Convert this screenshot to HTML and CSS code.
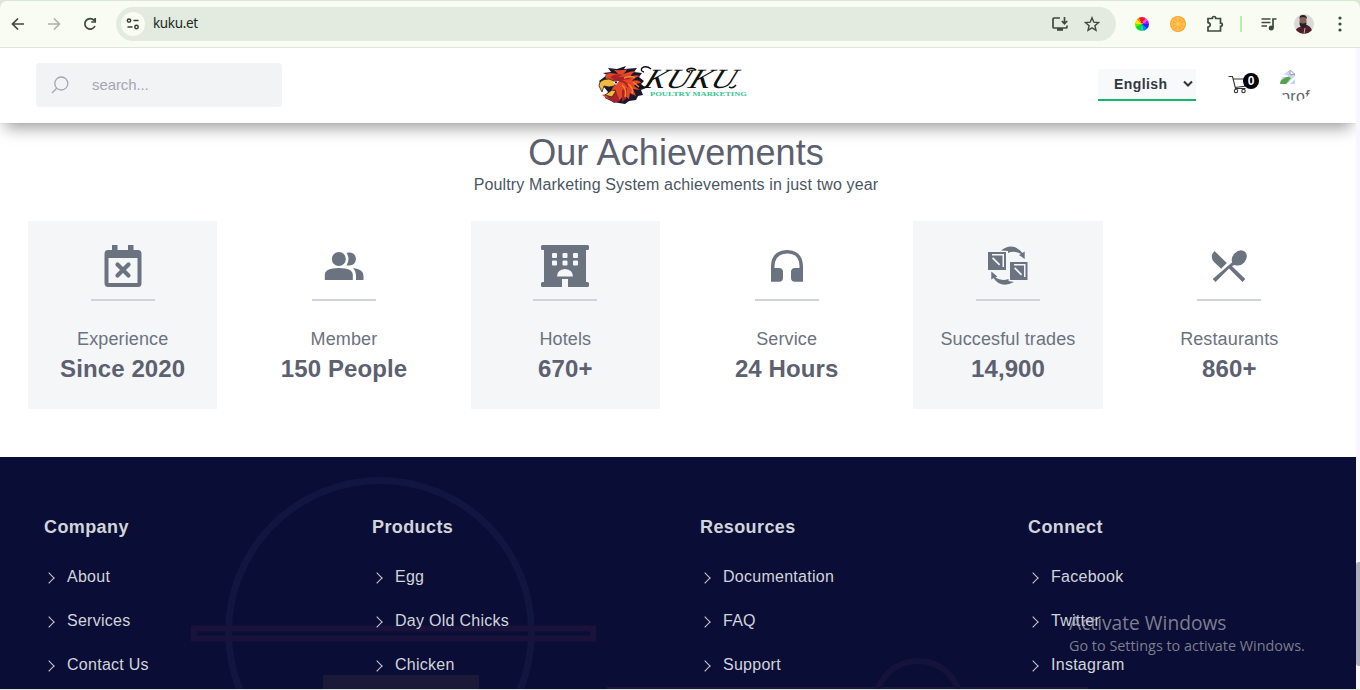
FILE: index.html
```html
<!DOCTYPE html>
<html lang="en">
<head>
<meta charset="utf-8">
<title>Kuku Poultry Marketing</title>
<link rel="stylesheet" href="styles.css">
</head>
<body>
<div class="window">
  <header class="browser">
    <svg class="bi back" width="16" height="16" viewBox="0 0 16 16"><path d="M14 8H3M8 2.500L2.500 8L8 13.500"/></svg>
    <svg class="bi forward" width="16" height="16" viewBox="0 0 16 16"><path d="M2 8h11M8 2.500L13.500 8L8 13.500"/></svg>
    <svg class="bi reload" width="16" height="16" viewBox="0 0 16 16"><path d="M13 10a5.300 5.300 0 1 1-.8-5.600M13.200 2v4H9.200"/></svg>
    <div class="omnibox">
      <span class="tune"><svg width="14" height="12" viewBox="0 0 14 12"><circle cx="3" cy="2.600" r="1.700"/><path d="M7.500 2.600H12.500M1.500 9H6.500"/><circle cx="10.500" cy="9" r="1.700"/></svg></span>
      <span class="url">kuku.et</span>
      <svg class="bi install" width="18" height="16" viewBox="0 0 18 16"><path d="M9 2H3Q2 2 2 3v8q0 1 1 1h12q1 0 1-1V9.500M13.500 1v6M10.800 5l2.700 2.700L16.200 5"/><path class="solid" d="M6 12h6v2.800H6z"/></svg>
      <svg class="bi star" width="16" height="16" viewBox="0 0 16 16"><path d="M8 1.800l1.800 4.400 4.700.4-3.600 3.100 1.100 4.600L8 11.800l-4 2.500 1.100-4.600-3.600-3.100 4.700-.4z"/></svg>
    </div>
    <span class="wheel"></span>
    <svg class="orange" width="16" height="16" viewBox="0 0 16 16"><circle cx="8" cy="8" r="8" fill="#f9a42c"/><circle cx="8" cy="8" r="6.300" fill="#ffad2b" stroke="#ffd58b" stroke-width=".7"/><path d="M8 2v12M2 8h12M3.800 3.800l8.400 8.400M12.200 3.800l-8.400 8.400" stroke="#ffd27c" stroke-width=".8"/></svg>
    <svg class="bi puzzle" width="18" height="18" viewBox="0 0 18 18"><path d="M2 3.500h4.300Q6.300 1.500 8 1.500t1.700 2H14.500v4.700q1.800 0 1.800 1.600t-1.800 1.600V16H2v-4q2.200-.3 2.200-2.200T2 7.600z"/></svg>
    <span class="divider"></span>
    <svg class="bi media" width="16" height="16" viewBox="0 0 16 16"><path d="M.5 3h9M.5 6.500h9M.5 10H6M12 12V3h3.500"/><circle class="solid" cx="10.200" cy="12" r="2.500"/></svg>
    <svg class="avatar" width="20" height="20" viewBox="0 0 20 20"><defs><clipPath id="face"><circle cx="10" cy="10" r="10"/></clipPath></defs><g clip-path="url(#face)"><path fill="#d9d9db" d="M0 0h20v20H0z"/><path fill="#4b2029" d="M1 20q0-6 5-7l3-2h4q5 2 6 9z"/><ellipse cx="9" cy="7" rx="3.500" ry="5.500" fill="#8a6254"/><path fill="#252126" d="M5.500 5Q5 1 9 1t4 4q-1-2-4-2t-3.500 2M5.500 8.500q3.500 2 7 0 0 5-3.500 5t-3.500-5"/><path stroke="#db9fa7" d="M11 14l-1 6"/></g></svg>
    <svg class="dots" width="4" height="16" viewBox="0 0 4 16"><circle cx="2" cy="2" r="1.600"/><circle cx="2" cy="8" r="1.600"/><circle cx="2" cy="14" r="1.600"/></svg>
  </header>

  <div class="view">
    <div class="page">
      <nav class="nav">
        <label class="search">
          <svg width="18" height="18" viewBox="0 0 18 18"><circle cx="10.300" cy="7.500" r="6.500"/><path d="M5.700 12.200L1 17"/></svg>
          <span>search...</span>
        </label>
        <svg class="logo" width="152" height="42" viewBox="0 0 152 42">
          <path fill="#19172b" d="M2 17L10 11 6 9l8-1-3-4 9 1 9-3-2 3 13-1-3 4 8 1-3 4 5 4-3 3 5 4-5 2 2 5-5 1-2 4-7 1-4 3-12-2-8-4 3-6z"/>
          <path fill="#e34725" d="M10 16Q5 10 13 9l8 1Q17 5 14 5q6 2 11 1 3 0 5-1-1 3-4 5 8-3 13-3-4 2-6 6 5-3 10-1-5 1-8 5 7-2 9 2-5 0-7 3l6 4-7-1 3 7-6-3-1 6-5-4-5 6-11-2-6-4 8-2 4-8z"/>
          <path fill="#a8222c" d="M13 13q6-4 13-2l-6 2q11-1 14 2l-9 1q8 3 6 8l-4-5-10-3zM18 25l5 12-6 2-7-6zM30 24l-1 11-4 3V26z"/>
          <path fill="#f2b83f" stroke="#2b2024" stroke-width=".8" d="M2 22q0-7 10-7l8 3-3 4-5 1-5-1-2 6zM8 31l7-5 4 1-4 6z"/>
          <path fill="#fff" d="M16 18l6-1-3 4z"/><circle cx="19" cy="18.500" r="1"/>
          <path fill="none" stroke="#f78627" stroke-width="1.500" d="M25 21q5 4 3 12M31 20q6 4 4 10M36 18l6 5M27 14q8-3 11 0"/>
          <g transform="translate(9 0) skewX(-22)">
            <text class="brand" x="46" y="24" textLength="90" lengthAdjust="spacingAndGlyphs">KUKU</text>
          </g>
          <path class="flourish" d="M43 22q5 5 12-6M47 8q-4-1-2-4 4-3 9 1M93 8q-5-1-2-3 5-2 8 1M132 23q4 2 7-2"/>
          <text class="tagline" x="53" y="31.500" textLength="97" lengthAdjust="spacingAndGlyphs">POULTRY MARKETING</text>
        </svg>
        <div class="actions">
          <div class="language"><span>English</span><svg width="10" height="8" viewBox="0 0 10 8"><path d="M1 1.500l4 4 4-4"/></svg></div>
          <div class="cart">
            <svg width="20" height="19" viewBox="0 0 20 19"><path d="M.5 1.500h4l3 12h10M5 4h14l-2.500 7.300L7 12.500"/><circle cx="8" cy="16" r="1.700"/><circle cx="15.500" cy="16" r="1.700"/></svg>
            <span class="badge">0</span>
          </div>
          <div class="profile">
            <svg width="16" height="16" viewBox="0 0 16 16"><path fill="#c5d5f6" d="M0 1h10l5 4v10H0z"/><path fill="#fff" d="M2 7q1-3 3-1 3-1 3 2H2z"/><path fill="#52a447" d="M0 15V13q6-7 11-4l-5 6z"/><path fill="#fff" d="M16 6v3l-7 7H6z"/><path fill="#fff" stroke="#9aa0aa" d="M10 .8v4.700h5z"/><path fill="none" stroke="#a2a8b0" d="M0 15V1h4"/></svg>
            <span>profile</span>
          </div>
        </div>
      </nav>

      <main class="achievements">
        <h1>Our Achievements</h1>
        <p class="lead">Poultry Marketing System achievements in just two year</p>
        <div class="stats">
          <article class="stat shaded">
            <svg width="48" height="48" viewBox="0 0 48 48"><path fill-rule="evenodd" d="M13 3h5.500v5h10.500V3h5.500v5H39q3.500 0 3.500 4v29q0 4-3.500 4H9q-3.500 0-3.500-4V12q0-4 3.500-4h4zM9.500 16v25h29V16z"/><path class="cross" d="M18.500 22.500l11 11M29.500 22.500l-11 11"/></svg>
            <h2>Experience</h2><strong>Since 2020</strong>
          </article>
          <article class="stat">
            <svg width="48" height="48" viewBox="0 0 48 48"><circle cx="18.800" cy="17" r="7"/><path d="M4.800 38v-5q0-7 14-7t14 7v5zM26.500 23.200q4-6 0-12.400 8.500-2 9.500 6.200-1 8-9.500 6.200M33 26q10.500 1 10.500 8v4h-7.500v-5q0-4-3-7"/></svg>
            <h2>Member</h2><strong>150 People</strong>
          </article>
          <article class="stat shaded">
            <svg width="48" height="48" viewBox="0 0 48 48"><path fill-rule="evenodd" d="M1.500 3h45q1.500 0 1.500 1.500v2Q48 8 46.500 8H45v32h1.500q1.500 0 1.500 1.500v2q0 1.500-1.500 1.500H27v-8h-6v8H1.500Q0 45 0 43.500v-2Q0 40 1.500 40H3V8H1.500Q0 8 0 6.500v-2Q0 3 1.500 3zM12 11q-1 0-1 1v3q0 1 1 1h3q1 0 1-1v-3q0-1-1-1zm10.500 0q-1 0-1 1v3q0 1 1 1h3q1 0 1-1v-3q0-1-1-1zm10.500 0q-1 0-1 1v3q0 1 1 1h3q1 0 1-1v-3q0-1-1-1zM12 18.500q-1 0-1 1v3q0 1 1 1h3q1 0 1-1v-3q0-1-1-1zm10.500 0q-1 0-1 1v3q0 1 1 1h3q1 0 1-1v-3q0-1-1-1zm10.500 0q-1 0-1 1v3q0 1 1 1h3q1 0 1-1v-3q0-1-1-1zM16 34.500h16q0-7-8-7.500-8 .5-8 7.500z"/></svg>
            <h2>Hotels</h2><strong>670+</strong>
          </article>
          <article class="stat">
            <svg width="48" height="48" viewBox="0 0 48 48"><path d="M24 8Q8.500 8.500 8 24v15.800h8q4 0 4-4V30q0-4-4-4h-4.500v-2q.5-12 12.500-12.500T36.500 24v2H32q-4 0-4 4v5.800q0 4 4 4h8V24Q39.500 8.500 24 8z"/></svg>
            <h2>Service</h2><strong>24 Hours</strong>
          </article>
          <article class="stat shaded">
            <svg width="48" height="48" viewBox="0 0 48 48"><path fill-rule="evenodd" d="M4 10h18v18H4zM8 12v1.500h10.500V25H20V12zM8 16.500l7 7 1.200-1.200-7-7zM26 20h17.500v18H26zM30 22v1.500h10V35h1.500V22zM30 26.500l7 7 1.200-1.200-7-7z"/><path d="M17 8.500Q29-.5 38.500 11l2.200-1.500V17L35 13l2-1Q30 8 24 11V9zM30 40Q17 47 9.500 36l-2.200 1.500V29.500l6 5-2 1q6 4 13.300 1.500V39z"/></svg>
            <h2>Succesful trades</h2><strong>14,900</strong>
          </article>
          <article class="stat">
            <svg width="48" height="48" viewBox="0 0 48 48"><path d="M16.200 26.700l5.600-5.700L9.500 9q-5.500 6 0 11.500zM29.800 23q5 2 9.500-2.600 4.500-6 1-10.400-5-4-10.600 1.300Q25.400 16 27.200 20.300L7.700 37l2.800 2.900L24 26.500l13.500 13.400 2.800-2.900-13.500-13z"/></svg>
            <h2>Restaurants</h2><strong>860+</strong>
          </article>
        </div>
      </main>

      <footer class="footer">
        <svg class="pattern" width="1356" height="232" viewBox="0 0 1356 232" fill="none"><circle cx="380" cy="175" r="151.500" stroke="#111641" stroke-width="7"/><path stroke="#19123a" stroke-width="6" d="M194 171.500h399v10H194z"/><path fill="#1a1938" d="M323 218h156v14H323zM607 230h481v2H607z"/><circle cx="918" cy="247" r="43" stroke="#15123c" stroke-width="6"/></svg>
        <div class="links">
          <section><h3>Company</h3><a>About</a><a>Services</a><a>Contact Us</a></section>
          <section><h3>Products</h3><a>Egg</a><a>Day Old Chicks</a><a>Chicken</a></section>
          <section><h3>Resources</h3><a>Documentation</a><a>FAQ</a><a>Support</a></section>
          <section><h3>Connect</h3><a>Facebook</a><a>Twitter</a><a>Instagram</a></section>
        </div>
      </footer>
    </div>
    <div class="scrollbar"><span></span></div>
  </div>
  <aside class="activate"><div class="activate-title">Activate Windows</div><div class="activate-text">Go to Settings to activate Windows.</div></aside>
</div>
</body>
</html>
```
FILE: styles.css
```css
* { box-sizing: border-box; }
body { margin: 0; background: #ddd3dd; font-family: "Liberation Sans", Arial, sans-serif; color: #5f6473; overflow: hidden; }
svg { display: block; flex: none; }
h1, h2, h3, p { margin: 0; font-weight: 400; }
.window { position: relative; width: 1360px; height: 690px; padding-top: 1px; background: #dce6d7; overflow: hidden; }

.browser { display: flex; align-items: center; height: 47px; padding: 0 18px 0 10px; background: #f8fcf2; border-bottom: 1px solid #dfe5da; border-radius: 7px 7px 0 0; }
.bi { fill: none; stroke: #3f4a3b; stroke-width: 1.7; }
.bi .solid { fill: #3f4a3b; stroke: none; }
.forward { margin-left: 20px; stroke: #adb3a8; }
.reload { margin-left: 20px; }
.omnibox { display: flex; align-items: center; width: 1000px; height: 34px; margin-left: 18px; padding: 0 16px 0 5px; border-radius: 17px; background: #e3eadf; }
.tune { display: grid; place-items: center; width: 24px; height: 24px; border-radius: 50%; background: #f8fcf2; }
.tune svg { fill: none; stroke: #354032; stroke-width: 1.5; }
.url { margin: -2px 0 0 8px; font: 13.5px "Noto Sans", sans-serif; letter-spacing: -.35px; color: #202b1e; }
.install { margin-left: auto; }
.star { margin-left: 15px; stroke-width: 1.4; }
.wheel { width: 14px; height: 14px; margin-left: 19px; border-radius: 50%; background: conic-gradient(#ff1616 30deg, #ff4ef5 0 60deg, #9d19ff 0 90deg, #2421ff 0 135deg, #0085e8 0 165deg, #00d8ca 0 195deg, #00e31b 0 245deg, #62ef00 0 275deg, #ffe800 0 310deg, #ff9200 0 335deg, #ff1616 0); }
.orange { margin-left: 21px; }
.puzzle { margin-left: 20px; }
.divider { width: 2px; height: 16px; margin-left: 16px; background: #b6efac; }
.media { margin-left: 19px; }
.avatar { margin-left: 17px; }
.dots { margin-left: auto; fill: #3f4a3b; }

.view { display: flex; height: 641px; overflow: hidden; background: #fff; }
.page { width: 1356px; overflow: hidden; }
.nav { position: relative; z-index: 2; display: grid; grid-template-columns: 1fr 152px 1fr; align-items: center; height: 75px; padding: 0 44px 2px 36px; background: #fff; box-shadow: 0 10px 15px -5px rgba(0,0,0,.38), 0 0 1px rgba(0,0,0,.15); }
.search { display: flex; align-items: center; width: 246px; height: 44px; padding-left: 15px; border-radius: 4px; background: #f2f3f5; font-size: 15px; letter-spacing: -.1px; color: #a2a7b2; }
.search svg { fill: none; stroke: #a3a7b2; stroke-width: 1.3; }
.search span { margin-left: 23px; }
.logo { margin-left: -1px; }
.brand { font: italic 28px "Liberation Serif", serif; fill: #111; }
.flourish { fill: none; stroke: #111; stroke-width: 1.4; }
.tagline { font: bold 6px "Liberation Serif", serif; fill: #34c68d; }
.actions { display: flex; align-items: center; justify-content: flex-end; }
.language { display: flex; align-items: center; justify-content: space-between; width: 98px; height: 32px; padding: 0 3px 0 16px; background: #f8f9fb; border-bottom: 2px solid #10b969; font-size: 14px; font-weight: 700; letter-spacing: .4px; color: #333840; }
.language svg { fill: none; stroke: #333; stroke-width: 2; }
.cart { position: relative; width: 32px; margin-left: 32px; }
.cart svg { fill: none; stroke: #333; stroke-width: 1.1; }
.badge { position: absolute; left: 15px; top: -2px; width: 16px; height: 16px; border-radius: 50%; background: #000; color: #fff; font-size: 12px; font-weight: 700; line-height: 16px; text-align: center; }
.profile { width: 32px; height: 32px; margin-left: 20px; border-radius: 50%; overflow: hidden; font-size: 16px; line-height: 23px; }
.profile span { display: block; padding-left: 1px; letter-spacing: .4px; }

.achievements { height: 334px; padding: 9px 32px 0 28px; text-align: center; }
h1 { font-size: 36px; line-height: 42px; letter-spacing: .1px; color: #5c6070; }
.lead { padding-top: 1px; font-size: 16px; line-height: 20px; letter-spacing: .15px; color: #4b5563; }
.stats { display: grid; grid-template-columns: repeat(6, 1fr); gap: 32px; margin-top: 26px; }
.stat { display: flex; flex-direction: column; align-items: center; height: 188px; padding-top: 21px; white-space: nowrap; }
.shaded { background: #f4f6f8; }
.stat svg { fill: #6b7280; }
.stat .cross { fill: none; stroke: #6b7280; stroke-width: 4.2; stroke-linecap: round; }
.stat h2 { position: relative; margin-top: 9px; padding-top: 26px; font-size: 18px; line-height: 28px; letter-spacing: .12px; color: #6b7280; }
.stat h2::before { content: ""; position: absolute; top: 0; left: 50%; width: 64px; height: 2px; transform: translateX(-50%); background: #d1d3da; }
.stat strong { font-size: 24px; line-height: 32px; letter-spacing: .1px; color: #5c6070; }

.footer { position: relative; height: 232px; background: #0a0d35; color: #d1d5db; }
.pattern { position: absolute; inset: 0; }
.links { position: relative; display: grid; grid-template-columns: repeat(4, 328px); padding: 56px 0 0 44px; }
.links section { display: flex; flex-direction: column; }
.links h3 { font-size: 18px; font-weight: 700; line-height: 28px; letter-spacing: .4px; margin-bottom: 14px; }
.links a { display: flex; align-items: center; height: 44px; font-size: 16px; letter-spacing: .27px; }
.links a::before { content: ""; width: 7px; height: 7px; margin: 1px 12px 0 3px; border-top: 1.5px solid #c6cad2; border-right: 1.5px solid #c6cad2; transform: translateX(-2px) rotate(45deg); }
.scrollbar { width: 4px; padding-top: 514px; background: #f5f6ff; }
.scrollbar span { display: block; height: 104px; border-radius: 3px 0 0 3px; background: #b0b2bc; }
.activate { position: absolute; z-index: 5; left: 1069px; top: 611px; font-family: "Open Sans", sans-serif; color: rgba(165,165,173,.75); white-space: nowrap; }
.activate-title { font-size: 19.2px; line-height: 24px; }
.activate-text { font-size: 14.4px; line-height: 22px; }
```
